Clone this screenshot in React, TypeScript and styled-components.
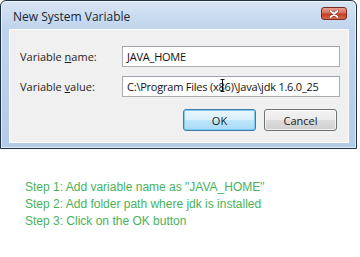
import React from "react";
import styled, { createGlobalStyle } from "styled-components";

const Global = createGlobalStyle`
  html, body { margin: 0; padding: 0; background: #ffffff; }
  body { width: 360px; height: 257px; overflow: hidden; }
`;

const Page = styled.div`
  width: 360px;
  height: 257px;
  background: #ffffff;
  display: flex;
  flex-direction: column;
`;

const Window = styled.div`
  width: 357px;
  box-sizing: border-box;
  border: 1px solid #1f3345;
  border-radius: 6px 6px 0 0;
  background: linear-gradient(180deg, #d7e5f4 0px, #bfd4ec 28px, #b4cbe6 100%);
  display: flex;
  flex-direction: column;
  padding: 0 7px 5px 8px;
  box-shadow: inset 0 0 0 1px rgba(255, 255, 255, 0.6);
`;

const TitleBar = styled.div`
  height: 28px;
  display: flex;
  align-items: center;
  justify-content: space-between;
  padding: 0 2px 0 4px;
`;

const Title = styled.div`
  font-family: "Open Sans", "Noto Sans", sans-serif;
  font-size: 12px;
  color: #1b2430;
  margin-top: 3px;
`;

const CloseButton = styled.div`
  width: 26px;
  height: 13px;
  margin-top: -3px;
  border: 1px solid #7a2a22;
  border-radius: 3px;
  box-sizing: border-box;
  background: linear-gradient(180deg, #e8a08f 0%, #d6705c 45%, #c33a22 55%, #d8684a 100%);
  display: flex;
  align-items: center;
  justify-content: center;
`;

const Client = styled.div`
  height: 114px;
  box-sizing: border-box;
  background: #f0f0f0;
  border: 1px solid #fafcff;
  padding: 16px 8px 0 10px;
  display: flex;
  flex-direction: column;
  gap: 9px;
`;

const Row = styled.div`
  display: flex;
  align-items: center;
  height: 21px;
`;

const Label = styled.div`
  font-family: "Open Sans", "Noto Sans", sans-serif;
  font-size: 11px;
  color: #1e1e1e;
  width: 102px;
  u { text-decoration: underline; text-underline-offset: 1px; }
`;

const Field = styled.div`
  position: relative;
  width: 218px;
  height: 21px;
  box-sizing: border-box;
  background: #ffffff;
  border: 1px solid #abadb3;
  border-top-color: #9fa3ab;
  display: flex;
  align-items: center;
  padding-left: 4px;
  font-family: "Open Sans", "Noto Sans", sans-serif;
  font-size: 11px;
  letter-spacing: -0.22px;
  color: #111111;
  white-space: nowrap;
`;

const Buttons = styled.div`
  display: flex;
  justify-content: flex-end;
  gap: 8px;
  padding-right: 3px;
  margin-top: 3px;
`;

const Button = styled.div<{ $primary?: boolean }>`
  width: 73px;
  height: 22px;
  box-sizing: border-box;
  border-radius: 3px;
  border: 1px solid ${(p) => (p.$primary ? "#3d7bad" : "#707070")};
  background: ${(p) =>
    p.$primary
      ? "linear-gradient(180deg, #eaf6fd 0%, #d9f0fc 50%, #bee6fd 51%, #a7d9f5 100%)"
      : "linear-gradient(180deg, #f2f2f2 0%, #ebebeb 50%, #dddddd 51%, #cfcfcf 100%)"};
  box-shadow: inset 0 0 0 1px ${(p) => (p.$primary ? "rgba(120,200,240,0.9)" : "rgba(255,255,255,0.7)")};
  display: flex;
  align-items: center;
  justify-content: center;
  font-family: "Open Sans", "Noto Sans", sans-serif;
  font-size: 11px;
  color: #1a1a1a;
`;

const IBeam = styled.svg`
  position: absolute;
  left: 97px;
  top: 2px;
`;

const Steps = styled.div`
  margin-top: 30px;
  padding-left: 25px;
  font-family: "Liberation Sans", Arial, sans-serif;
  font-size: 12px;
  line-height: 17px;
  color: #47b25b;
`;

export default function App() {
  return (
    <Page>
      <Global />
      <Window>
        <TitleBar>
          <Title>New System Variable</Title>
          <CloseButton>
            <svg width="10" height="8" viewBox="0 0 10 8">
              <path d="M1.5 1 L8.5 7 M8.5 1 L1.5 7" stroke="#4a1410" strokeWidth="3" strokeLinecap="round" opacity="0.5" />
              <path d="M1.5 1 L8.5 7 M8.5 1 L1.5 7" stroke="#ffffff" strokeWidth="1.8" strokeLinecap="round" />
            </svg>
          </CloseButton>
        </TitleBar>
        <Client>
          <Row>
            <Label>
              Variable <u>n</u>ame:
            </Label>
            <Field>JAVA_HOME</Field>
          </Row>
          <Row>
            <Label>
              Variable <u>v</u>alue:
            </Label>
            <Field>
              C:\Program Files (x86)\Java\jdk 1.6.0_25
              <IBeam width="5" height="13" viewBox="0 0 5 13">
                <path d="M0.5 0.5 H4.5 M2.5 0.5 V12.5 M0.5 12.5 H4.5" stroke="#111" strokeWidth="1" fill="none" />
              </IBeam>
            </Field>
          </Row>
          <Buttons>
            <Button $primary>OK</Button>
            <Button>Cancel</Button>
          </Buttons>
        </Client>
      </Window>
      <Steps>
        <div>Step 1: Add variable name as "JAVA_HOME"</div>
        <div>Step 2: Add folder path where jdk is installed</div>
        <div>Step 3: Click on the OK button</div>
      </Steps>
    </Page>
  );
}
